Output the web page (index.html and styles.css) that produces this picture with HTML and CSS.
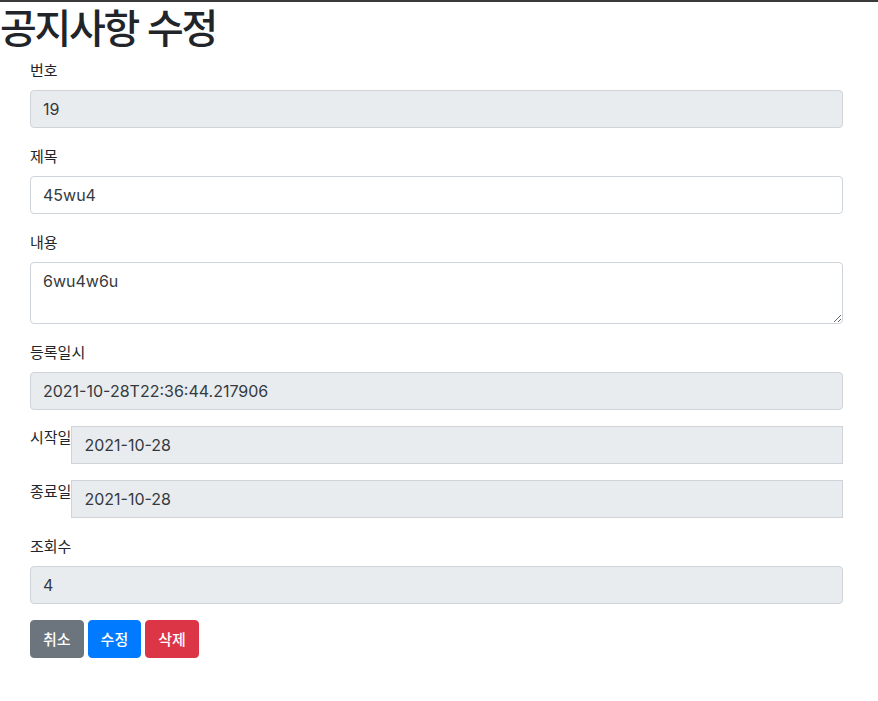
FILE: index.html
```html
<!DOCTYPE html>
<html lang="ko">
<head>
<meta charset="utf-8">
<title>공지사항 수정</title>
<link rel="stylesheet" href="styles.css">
</head>
<body>
<div class="topbar"></div>
<h1 class="title">공지사항 수정</h1>
<form class="form">
  <div class="group">
    <label class="label">번호</label>
    <input class="control" type="text" value="19" disabled>
  </div>
  <div class="group">
    <label class="label">제목</label>
    <input class="control" type="text" value="45wu4">
  </div>
  <div class="group">
    <label class="label">내용</label>
    <textarea class="control area" rows="2">6wu4w6u</textarea>
  </div>
  <div class="group">
    <label class="label">등록일시</label>
    <input class="control" type="text" value="2021-10-28T22:36:44.217906" disabled>
  </div>
  <div class="inline-group">
    <label class="label inline-label">시작일</label>
    <input class="control square" type="text" value="2021-10-28" disabled>
  </div>
  <div class="inline-group">
    <label class="label inline-label">종료일</label>
    <input class="control square" type="text" value="2021-10-28" disabled>
  </div>
  <div class="group">
    <label class="label">조회수</label>
    <input class="control" type="text" value="4" disabled>
  </div>
  <div class="actions">
    <button type="button" class="btn btn-secondary">취소</button>
    <button type="button" class="btn btn-primary">수정</button>
    <button type="button" class="btn btn-danger">삭제</button>
  </div>
</form>
</body>
</html>
```

FILE: styles.css
```css
html, body {
  margin: 0;
  padding: 0;
  background: #fff;
}
body {
  font-family: Inter, "Noto Sans CJK KR", sans-serif;
  font-size: 16px;
  line-height: 1.5;
  color: #212529;
}
.topbar {
  height: 2px;
  background: #3a3a3a;
}
.title {
  margin: 0 0 8px 0;
  font-family: "Noto Sans CJK KR", sans-serif;
  font-size: 40px;
  font-weight: 500;
  line-height: 48px;
  letter-spacing: -2.3px;
  color: #212529;
}
.form {
  padding: 0 35px 0 30px;
}
.group {
  margin-bottom: 16px;
}
.label {
  display: block;
  margin-bottom: 8px;
  font-family: "Noto Sans CJK KR", sans-serif;
  font-size: 15px;
  line-height: 24px;
  color: #212529;
}
.control {
  display: block;
  box-sizing: border-box;
  width: 100%;
  height: 38px;
  margin: 0;
  padding: 6px 12px;
  font-family: Inter, "Noto Sans CJK KR", sans-serif;
  font-size: 16px;
  line-height: 24px;
  color: #343a40;
  background: #fff;
  border: 1px solid #ced4da;
  border-radius: 4px;
}
.control:disabled {
  background: #e9ecef;
  opacity: 1;
  color: #343a40;
}
.area {
  height: 62px;
  resize: vertical;
}
.inline-group {
  display: flex;
  align-items: flex-start;
  margin-bottom: 16px;
}
.inline-label {
  flex: none;
  margin: 0;
  line-height: 22px;
}
.square {
  flex: 1;
  width: auto;
  border-radius: 0;
}
.actions {
  display: flex;
  gap: 4px;
}
.btn {
  box-sizing: border-box;
  height: 38px;
  padding: 6px 12px;
  font-family: "Noto Sans CJK KR", sans-serif;
  font-size: 15px;
  font-weight: 500;
  line-height: 24px;
  color: #fff;
  border: 1px solid transparent;
  border-radius: 4px;
}
.btn-secondary {
  background: #6c757d;
  border-color: #6c757d;
}
.btn-primary {
  background: #007bff;
  border-color: #007bff;
}
.btn-danger {
  background: #dc3545;
  border-color: #dc3545;
}
```
